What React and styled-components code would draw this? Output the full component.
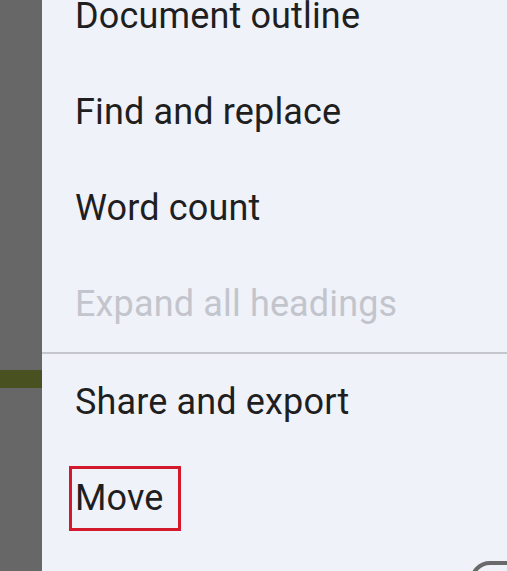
import React from "react";
import styled, { createGlobalStyle } from "styled-components";

const GlobalStyle = createGlobalStyle`
  html, body { margin: 0; padding: 0; }
  body { font-family: Roboto, "Noto Sans", sans-serif; overflow: hidden; }
`;

const Screen = styled.div`
  width: 507px;
  height: 571px;
  display: flex;
  overflow: hidden;
  position: relative;
  background: #f0f2fa;
`;

const Backdrop = styled.div`
  width: 42px;
  flex: none;
  background: #676767;
  display: flex;
  flex-direction: column;
  padding-top: 370px;
  box-sizing: border-box;
`;

const OliveBand = styled.div`
  height: 18px;
  background: #4a5120;
`;

const Menu = styled.ul`
  flex: 1;
  list-style: none;
  margin: -32px 0 0;
  padding: 0;
  background: #f0f2fa;
`;

const Item = styled.li`
  height: 96px;
  display: flex;
  align-items: center;
  padding-left: 33px;
  font-size: 36px;
  letter-spacing: 0.15px;
  color: ${(p) => (p.$disabled ? "#c3c5cc" : "#1f1f1f")};
`;

const Divider = styled.li`
  height: 2px;
  background: #c6c7cc;
`;

const Label = styled.span`
  position: relative;
  ${(p) =>
    p.$marked &&
    `
    &::after {
      content: "";
      position: absolute;
      left: -6px;
      top: -11px;
      width: 106px;
      height: 59px;
      border: 3px solid #d3192b;
    }
  `}
`;

const CornerPeek = styled.div`
  position: absolute;
  left: 470px;
  top: 561px;
  width: 80px;
  height: 40px;
  border: 4px solid #6a6a6a;
  border-radius: 22px;
  box-sizing: border-box;
`;

const items = [
  { label: "Document outline" },
  { label: "Find and replace" },
  { label: "Word count" },
  { label: "Expand all headings", disabled: true },
  { divider: true },
  { label: "Share and export" },
  { label: "Move", marked: true },
];

export default function App() {
  return (
    <>
      <GlobalStyle />
      <Screen>
        <Backdrop>
          <OliveBand />
        </Backdrop>
        <Menu>
          {items.map((it, i) =>
            it.divider ? (
              <Divider key={i} />
            ) : (
              <Item key={i} $disabled={it.disabled}>
                <Label $marked={it.marked}>{it.label}</Label>
              </Item>
            )
          )}
        </Menu>
        <CornerPeek />
      </Screen>
    </>
  );
}
